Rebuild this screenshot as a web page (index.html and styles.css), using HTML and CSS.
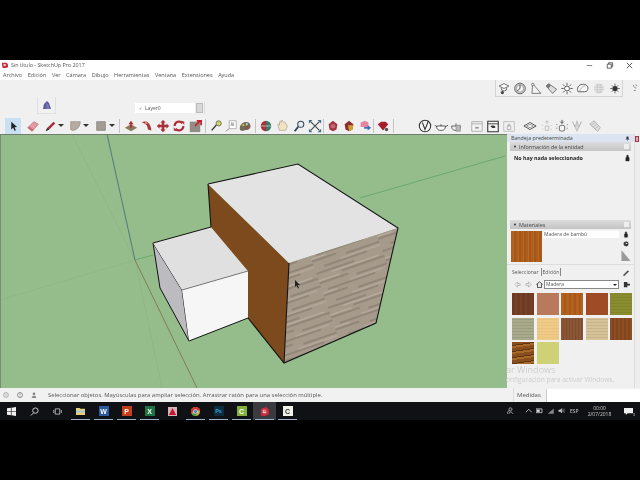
FILE: index.html
```html
<!DOCTYPE html>
<html lang="es">
<head>
<meta charset="utf-8">
<title>Sin título - SketchUp Pro 2017</title>
<link rel="stylesheet" href="styles.css">
</head>
<body>
<div class="letterbox"></div>
<main class="window">
  <header class="titlebar">
    <svg class="app-icon" viewBox="0 0 8 8"><path d="M0 1h6l2 2v4l-3 1H1L0 5z" fill="#c8323c"/><path d="M2 3h3v2H2z" fill="#fff"/></svg>
    <span class="title">Sin título - SketchUp Pro 2017</span>
    <span class="win-controls">
      <svg viewBox="0 0 10 10"><path d="M2 5h6" stroke="#777"/></svg>
      <svg viewBox="0 0 10 10"><path d="M2.5 3.5h4.500v4.500h-4.500zM4 3.500v-1.500h4.500v4.500h-1.500" fill="none" stroke="#555"/></svg>
      <svg viewBox="0 0 10 10"><path d="M2 2l6 6M8 2l-6 6" stroke="#444"/></svg>
    </span>
  </header>
  <nav class="menubar">
    <span>Archivo</span><span>Edición</span><span>Ver</span><span>Cámara</span><span>Dibujo</span><span>Herramientas</span><span>Ventana</span><span>Extensiones</span><span>Ayuda</span>
  </nav>
  <div class="toolbars">
    <div class="tool-row row-one">
      <div class="tool-group boxed">
        <svg class="ic" viewBox="0 0 16 16"><path d="M2 5l6-3 6 3-6 3zM5 7v3l3 1 3-1V7" fill="#fff" stroke="#444" stroke-width=".9"/><circle cx="6" cy="13" r="2" fill="#444"/></svg>
        <svg class="ic" viewBox="0 0 16 16"><circle cx="8" cy="8" r="6.500" fill="#ddd" stroke="#444"/><circle cx="8" cy="8" r="4.500" fill="#f4f4f4" stroke="#666" stroke-width=".7"/><path d="M8 3.500V8L4.500 11" fill="none" stroke="#333"/></svg>
        <svg class="ic" viewBox="0 0 16 16"><path d="M4 2l10 12H3z" fill="#f2f2f0" stroke="#555" stroke-width=".9"/><circle cx="4" cy="3" r="1.500" fill="#fff" stroke="#444" stroke-width=".8"/></svg>
        <svg class="ic" viewBox="0 0 16 16"><path d="M2 5l3-3 10 7-5 5z" fill="#ddd" stroke="#555" stroke-width=".9"/><path d="M2 5l3-3 3 2-3 4z" fill="#777"/></svg>
        <svg class="ic" viewBox="0 0 16 16"><circle cx="8" cy="8" r="3" fill="#fff" stroke="#333"/><path d="M8 1v3M8 12v3M1 8h3M12 8h3M3 3l2 2M11 11l2 2M13 3l-2 2M5 11l-2 2" stroke="#444"/></svg>
        <svg class="ic" viewBox="0 0 16 16"><path d="M2 12a6 6 0 0 1 5-9c4-1 8 2 7 6-1 3-3 3-6 3z" fill="#f7f7f7" stroke="#444"/><path d="M4 12c0-4 3-6 7-8" fill="none" stroke="#777" stroke-width=".7"/></svg>
        <svg class="ic" viewBox="0 0 16 16"><circle cx="8" cy="8" r="6" fill="#c8c8c8"/><path d="M2 8h12M8 2v12M4 3.500v9M12 3.500v9M3 5h10M3 11h10" stroke="#eee" stroke-width=".7"/></svg>
        <svg class="ic" viewBox="0 0 16 16"><circle cx="8" cy="8" r="3.200" fill="#333"/><path d="M8 2v3M8 11v3M2 8h3M11 8h3M4 4l2 2M10 10l2 2M12 4l-2 2M6 10l-2 2" stroke="#555"/></svg>
      </div>
      <svg class="ic far" viewBox="0 0 16 16"><path d="M2 3c1 4 3 5 5 5M3 12h3M6 2l2 3" fill="none" stroke="#555"/></svg>
    </div>
    <div class="tool-row row-two">
      <div class="shape-handle"><svg class="ic small" viewBox="0 0 12 12"><path d="M2 10l1-5 3-3 2 2 2 6z" fill="#5d5a9c"/><path d="M5 4l2 1 2 5H5z" fill="#7673b5"/></svg></div>
      <div class="layer-box">
        <span class="layer-field"><span class="check">✓</span>Layer0</span>
        <span class="layer-arrow"></span>
      </div>
    </div>
    <div class="tool-row row-three">
      <span class="active"><svg class="ic" viewBox="0 0 16 16"><path d="M6 3v9l2.200-2 1.600 3.500 1.500-.7L9.700 9.400l3-.4z" fill="#222"/></svg></span>
      <svg class="ic gap-4" viewBox="0 0 16 16"><path d="M2 10l7-7 5 3-7 8z" fill="#e79aa3" stroke="#a85a66" stroke-width=".7"/><path d="M2 10l5 4 1.500-1.700-5-4z" fill="#c96a78"/></svg>
      <svg class="ic gap-1" viewBox="0 0 16 16"><path d="M3 14l2-4 7-7 2 2-7 7z" fill="#a5303f"/><path d="M3 14l2-4 2 2z" fill="#333"/></svg>
      <span class="drop"></span>
      <svg class="ic gap-3" viewBox="0 0 16 16"><path d="M3 3h11c0 6-4 10-9 10l-2-1z" fill="#b6aba1" stroke="#8d837a" stroke-width=".7"/></svg>
      <span class="drop"></span>
      <svg class="ic gap-4" viewBox="0 0 16 16"><path d="M3 3h10v10H3z" fill="#a39c95" stroke="#7d7873" stroke-width=".7"/></svg>
      <span class="drop"></span>
      <span class="sep sep-wide"></span>
      <svg class="ic" viewBox="0 0 16 16"><path d="M1 10l7-4 7 4-7 4z" fill="#8c7a5c"/><path d="M8 2l3 4H9v4H7V6H5z" fill="#a9323a"/></svg>
      <svg class="ic" viewBox="0 0 16 16"><path d="M2 4c5-3 10 0 11 9l-4-1C9 7 6 5 2 4z" fill="#a9323a"/><path d="M7 2l2 3-4 1z" fill="#d88"/></svg>
      <svg class="ic" viewBox="0 0 16 16"><path d="M8 1l3 3H9.500v2.500H12V5l3 3-3 3V9.500H9.500V12H11l-3 3-3-3h1.500V9.500H4V11L1 8l3-3v1.500h2.500V4H5z" fill="#a9323a"/></svg>
      <svg class="ic" viewBox="0 0 16 16"><path d="M3 8a5 5 0 0 1 9-3M13 8a5 5 0 0 1-9 3" fill="none" stroke="#b02c36" stroke-width="2.400"/><path d="M11 2l3 1v4zM5 14l-3-1V9z" fill="#b02c36"/></svg>
      <svg class="ic" viewBox="0 0 16 16"><path d="M2 3h12v12H2z" fill="#918c86"/><path d="M8 8l6-6M10 2h5v5" fill="none" stroke="#c4202e" stroke-width="2"/></svg>
      <span class="sep"></span>
      <svg class="ic" viewBox="0 0 16 16"><path d="M3 13l8-9" stroke="#333" stroke-width="1.500"/><circle cx="11" cy="5" r="3" fill="#cbd26b" stroke="#554" stroke-width=".8"/></svg>
      <svg class="ic neg-1" viewBox="0 0 16 16"><path d="M6 2h8v9H6z" fill="#fff" stroke="#999" stroke-width=".8"/><path d="M2 14l4-3" stroke="#888"/><path d="M8 8l1-4 1 4M11 4v4" stroke="#777" stroke-width=".7" fill="none"/></svg>
      <svg class="ic neg-2" viewBox="0 0 16 16"><path d="M2 11c0-6 6-9 10-7 3 2 3 6 1 7-2 2-4 1-6 2-3 1-5 0-5-2z" fill="#6f6a55"/><circle cx="6" cy="7" r="1.300" fill="#d8b94a"/><circle cx="10" cy="6" r="1.300" fill="#c7c7c7"/><circle cx="11" cy="10" r="1.300" fill="#b33"/></svg>
      <span class="sep"></span>
      <svg class="ic" viewBox="0 0 16 16"><path d="M8 2a6 6 0 0 0 0 12z" fill="#a9323a"/><path d="M8 2a6 6 0 0 1 0 12z" fill="#3a7a66"/><path d="M2 8h12" stroke="#eee" stroke-width=".7"/></svg>
      <svg class="ic gap-1" viewBox="0 0 16 16"><path d="M4 13L2 7c0-2 2-1 2 0V4c0-2 2-2 2 0V3c0-2 2-2 2 0l1 1c1-1 2 0 2 1l2 3-2 5z" fill="#efe3c6" stroke="#a89878" stroke-width=".7"/></svg>
      <svg class="ic" viewBox="0 0 16 16"><circle cx="10" cy="6" r="3.500" fill="#e4ecf4" stroke="#345" stroke-width="1.200"/><path d="M7 9l-4 5" stroke="#345" stroke-width="2"/></svg>
      <svg class="ic" viewBox="0 0 16 16"><path d="M3 3l10 10M13 3L3 13" stroke="#4a4f55" stroke-width="1.500"/><path d="M1 1h4L1 5zM15 1v4l-4-4zM1 15v-4l4 4zM15 15h-4l4-4z" fill="#3c6f8c"/></svg>
      <span class="sep sep-tight"></span>
      <svg class="ic" viewBox="0 0 16 16"><path d="M3 6l5-4 5 4-1 6-4 2-4-2z" fill="#a1323e"/><path d="M6 6h4l1 3-3 2-3-2z" fill="#c76870"/></svg>
      <svg class="ic" viewBox="0 0 16 16"><path d="M3 6l5-4 5 4-1 6-4 2-4-2z" fill="#8c3030"/><path d="M7 7h6l-1 5-4 2z" fill="#d2a030"/></svg>
      <svg class="ic" viewBox="0 0 16 16"><path d="M3 4l5-2 4 2v5H3z" fill="#e586a0"/><path d="M7 9h4V7l4 3-4 3v-2H7z" fill="#3f6fb0"/></svg>
      <span class="sep sep-tight"></span>
      <svg class="ic" viewBox="0 0 16 16"><path d="M2 6l4-3h5l3 3-6 7z" fill="#a51d2c"/><circle cx="12" cy="12" r="2" fill="#555"/></svg>
      <span class="sep spacer"></span>
      <svg class="ic" viewBox="0 0 16 16"><circle cx="8" cy="8" r="6.500" fill="#f6f6f6" stroke="#333" stroke-width="1.200"/><path d="M5 4l3 8 4-10" fill="none" stroke="#333" stroke-width="1.200"/></svg>
      <svg class="ic" viewBox="0 0 16 16"><path d="M3 8h10c0 4-2 5-5 5s-5-1-5-5zM13 9l3-2M3 9L1 7M8 6v2" fill="#fff" stroke="#444"/></svg>
      <svg class="ic neg-1" viewBox="0 0 16 16"><path d="M3 8h10c0 4-2 5-5 5s-5-1-5-5zM8 5v3" fill="#eee" stroke="#555"/><path d="M8 7h5v7H8z" fill="#b8b8b8" stroke="#777" stroke-width=".6"/></svg>
      <svg class="ic gap-5" viewBox="0 0 16 16"><path d="M2 3h12v11H2z" fill="#f2f2f2" stroke="#aaa"/><path d="M2 5.500h12" stroke="#aaa"/><path d="M6 9h4v2H6z" fill="#999"/></svg>
      <svg class="ic" viewBox="0 0 16 16"><path d="M2 2.500h12v12H2z" fill="#f5f5f5" stroke="#333" stroke-width="1.200"/><path d="M2 5.500h12" stroke="#333"/><path d="M5 8c2-1 4-1 6 1-2 2-4 2-6-1z" fill="#333"/></svg>
      <svg class="ic" viewBox="0 0 16 16"><path d="M2 3h12v11H2z" fill="#f2f2f2" stroke="#bbb"/><path d="M6 8h4v4H6zM7 8V6h2v2" fill="none" stroke="#aaa"/></svg>
      <svg class="ic gap-5" viewBox="0 0 16 16"><path d="M1 8l7-4 7 4-7 4z" fill="#fafafa" stroke="#444"/><path d="M4 8l4-2 4 2-4 2z" fill="none" stroke="#666" stroke-width=".7"/></svg>
      <svg class="ic gap-1" viewBox="0 0 16 16"><path d="M6 8h4v5H6z" fill="#eee" stroke="#bbb"/><path d="M8 2v4M6 4l2-2 2 2" fill="none" stroke="#bbb"/><path d="M3 7v1M13 7v1M3 11v1M13 11v1" stroke="#bbb"/></svg>
      <svg class="ic neg-1" viewBox="0 0 16 16"><path d="M5 8l3-1 3 1v5l-3 1-3-1z" fill="#f4f4f4" stroke="#666"/><path d="M8 1v4M6 3l2 2 2-2" fill="none" stroke="#444"/><path d="M2 6v1M14 6v1M2 10v1M14 10v1" stroke="#555"/></svg>
      <svg class="ic neg-1" viewBox="0 0 16 16"><path d="M8 14L3 3l3 6 2-7 2 7 3-6z" fill="#d7d7d7" stroke="#aaa" stroke-width=".7"/></svg>
      <svg class="ic gap-2" viewBox="0 0 16 16"><path d="M2 6l5-4 7 8-3 4z" fill="#e0e0e0" stroke="#aaa"/><path d="M4 7l4-3M6 9l4-3M8 11l4-3" stroke="#aaa" stroke-width=".7"/></svg>
    </div>
  </div>
  <div class="workspace">
    <div class="canvas">
      <svg class="scene" viewBox="0 134 507 254" preserveAspectRatio="none">
        <defs>
          <filter id="soft" x="-5%" y="-5%" width="110%" height="110%"><feGaussianBlur stdDeviation=".6"/></filter>
          <pattern id="wood" width="70" height="36" patternUnits="userSpaceOnUse" patternTransform="rotate(-19)">
            <rect width="70" height="36" fill="#a69a8b"/>
            <path d="M0 2h40M25 7h45M0 12h30M38 15h32M6 20h50M0 25h25M35 28h35M10 33h45" stroke="#7f7365" stroke-width="1.100"/>
            <path d="M15 4.500h50M0 9.500h22M30 18h35M0 22.500h15M28 31h42" stroke="#bbb0a1" stroke-width="1.200"/>
          </pattern>
        </defs>
        <path class="axis faint" d="M72 134L135 260L162 388"/>
        <path class="axis faint" d="M0 300L135 260"/>
        <path class="axis blue" d="M107 134L135 260"/>
        <path class="axis red" d="M135 260L197 388"/>
        <path class="axis green" d="M135 260L153 255"/>
        <path class="axis green" d="M360 198L505 156"/>
        <path d="M153 243L182 290L189 341L160 288Z" fill="#bcbcc0" stroke="#111"/>
        <path d="M182 290L248 271V318L189 341Z" fill="#f6f6f7"/>
        <path d="M153 243L211 227L248 271L182 290Z" fill="#e0e0e1"/>
        <path d="M182 290L248 271" stroke="#333" stroke-width=".6"/>
        <path d="M248 318L189 341" stroke="#111"/>
        <path d="M153 243L211 227" stroke="#111"/>
        <path d="M208 184L289 263L284 363L248 318V271L211 227Z" fill="#7d4a1e"/>
        <path d="M208 184L298 164L398 228L289 263Z" fill="#e4e3e4"/>
        <path d="M289 263L398 228L376 323L284 363Z" fill="url(#wood)" filter="url(#soft)"/>
        <path d="M208 184L298 164L398 228L376 323L284 363L248 318M208 184L211 227M289 263L284 363" fill="none" stroke="#141414" stroke-width="1.100"/>
        <path d="M295 280v7l1.500-1.500 1.500 3 1-.5-1.500-3h2.500z" fill="#222"/>
      </svg>
    </div>
    <aside class="dock">
      <div class="tray">
        <div class="tray-title"><span>Bandeja predeterminada</span><svg class="pin" viewBox="0 0 6 6"><path d="M2 1h2v2l1 1H1l1-1zM3 4v2" fill="#334" stroke="#334" stroke-width=".4"/></svg></div>
        <div class="panel-head"><span class="tri">▼</span>Información de la entidad<span class="head-x"></span></div>
        <div class="entity-body">
          <div class="entity-line"><b>No hay nada seleccionado</b><svg class="lock" viewBox="0 0 6 9"><path d="M1 4h4v4H1zM2 4V2a1 1 0 0 1 2 0v2" fill="#222" stroke="#222" stroke-width=".5"/></svg></div>
        </div>
        <div class="panel-head"><span class="tri">▼</span>Materiales<span class="head-x"></span></div>
        <div class="material-top">
          <div class="preview"></div>
          <div class="mat-name">Madera de bambú</div>
          <div class="mat-side">
            <svg viewBox="0 0 6 9"><path d="M1 4h4v4H1zM2 4V2a1 1 0 0 1 2 0v2" fill="#222" stroke="#222" stroke-width=".5"/></svg>
            <svg viewBox="0 0 9 9"><path d="M1 3l4-2 3 2v4l-3 2-4-2z" fill="#333"/><path d="M4 3l3 1-3 2z" fill="#ddd"/></svg>
            <svg class="mat-wedge" viewBox="0 0 10 12"><path d="M0 0l10 12H0z" fill="#9a9a9c"/></svg>
          </div>
        </div>
        <div class="tabs">
          <span class="tab">Seleccionar</span><span class="tab tab-edit">Edición</span>
          <svg class="dropper" viewBox="0 0 10 10"><path d="M1 9l6-6 2 1-6 6z" fill="#555"/></svg>
        </div>
        <div class="nav-row">
          <svg viewBox="0 0 8 8"><path d="M1 4l3-3v2h3v2H4v2z" fill="none" stroke="#999" stroke-width=".7"/></svg>
          <svg viewBox="0 0 8 8"><path d="M7 4L4 1v2H1v2h3v2z" fill="none" stroke="#999" stroke-width=".7"/></svg>
          <svg viewBox="0 0 9 9"><path d="M.5 4.500L4.500 1l4 3.500M2 4v4.500h5V4" fill="#eee" stroke="#222"/></svg>
          <span class="nav-select">Madera<i></i></span>
          <svg viewBox="0 0 8 8"><path d="M1 1h4v2l3-0v2l-3 0v2H1z" fill="#333"/></svg>
        </div>
        <div class="swatches">
          <span class="sw s1"></span><span class="sw s2"></span><span class="sw s3"></span><span class="sw s4"></span><span class="sw s5"></span>
          <span class="sw s6"></span><span class="sw s7"></span><span class="sw s8"></span><span class="sw s9"></span><span class="sw s10"></span>
          <span class="sw s11"></span><span class="sw s12"></span>
        </div>
        <div class="watermark">
          <div class="wm-big">ar Windows</div>
          <div class="wm-small">onfiguración para activar Windows.</div>
        </div>
      </div>
      <div class="dock-strip">
        <span class="strip-pink"></span>
      </div>
    </aside>
  </div>
  <footer class="statusbar">
    <span class="status-icons">
      <svg viewBox="0 0 8 8"><circle cx="4" cy="4" r="3.300" fill="#ddd" stroke="#888" stroke-width=".7"/></svg>
      <svg viewBox="0 0 8 8"><circle cx="4" cy="4" r="3.300" fill="#fff" stroke="#444" stroke-width=".8"/><path d="M4 2v2.500M4 5.500v1" stroke="#333" stroke-width=".8"/></svg>
      <svg viewBox="0 0 8 8"><circle cx="4" cy="2.500" r="1.800" fill="#888"/><path d="M1 8c0-4 6-4 6 0z" fill="#888"/></svg>
    </span>
    <span class="status-text">Seleccionar objetos. Mayúsculas para ampliar selección. Arrastrar ratón para una selección múltiple.</span>
    <span class="measure-label">Medidas</span>
    <span class="measure-input"></span>
  </footer>
</main>
<div class="taskbar">
  <span class="task"><svg viewBox="0 0 10 10"><path d="M0 1.500l4.300-.6v3.800H0zM5 .8L10 0v4.700H5zM0 5.300h4.300v3.800L0 8.500zM5 5.300h5V10l-5-.7z" fill="#f2f2f2"/></svg></span>
  <span class="task"><svg viewBox="0 0 10 10"><circle cx="6" cy="4" r="3" fill="none" stroke="#ddd"/><path d="M4 6.500L1 9.500" stroke="#ddd"/></svg></span>
  <span class="task wide"><svg viewBox="0 0 12 10"><path d="M3 1.500h6v7H3zM1 3v4M11 3v4" fill="none" stroke="#ddd"/></svg></span>
  <span class="task open"><svg viewBox="0 0 10 10"><path d="M0 1h4l1 1h5v7H0z" fill="#e8cf7a"/><path d="M0 4h10v2H0z" fill="#9fc6d8"/></svg></span>
  <span class="task open"><b class="tile word">W</b></span>
  <span class="task open"><b class="tile ppt">P</b></span>
  <span class="task open"><b class="tile xls">X</b></span>
  <span class="task"><svg viewBox="0 0 10 10"><path d="M0 0h10v10H0z" fill="#d8b4b8"/><path d="M5 1l4 8H1z" fill="#c1182e"/></svg></span>
  <span class="task open"><svg viewBox="0 0 10 10"><circle cx="5" cy="5" r="5" fill="#d8b234"/><path d="M5 0a5 5 0 0 0-4.400 7.500L3 4h7a5 5 0 0 0-5-4z" fill="#d2332c"/><path d="M.6 7.500A5 5 0 0 0 5 10l2.200-3.500z" fill="#3b9a4a"/><circle cx="5" cy="5" r="2.200" fill="#3e7fd6" stroke="#fff" stroke-width=".6"/></svg></span>
  <span class="task open"><b class="tile ps">Ps</b></span>
  <span class="task open"><b class="tile cam">C</b></span>
  <span class="task current"><svg viewBox="0 0 10 10"><path d="M1 2l6-2 3 3v5l-4 2H1z" fill="#c92a3a"/><path d="M3 3h4v1H4v1h3v2H3z" fill="#f1c9cd"/></svg></span>
  <span class="task open"><b class="tile cwhite">C</b></span>
  <span class="tray-icons">
    <svg class="people" viewBox="0 0 10 10"><circle cx="6" cy="3" r="2" fill="none" stroke="#ccc"/><path d="M2 9c0-3 1-4 3-4M4 9c0-3 4-3 5 0" fill="none" stroke="#ccc"/></svg>
    <svg viewBox="0 0 10 10"><path d="M1 7l4-4 4 4" fill="none" stroke="#ddd"/></svg>
    <svg viewBox="0 0 10 10"><path d="M0 2.500h8v5H0z" fill="none" stroke="#ddd"/><path d="M1 3.500h4v3H1z" fill="#ddd"/></svg>
    <svg viewBox="0 0 10 10"><path d="M1 9l8-7v7z" fill="#888"/></svg>
    <svg viewBox="0 0 10 10"><path d="M1 4h2l2-2v6L3 6H1zM6.500 3.500v3M8 2v6" fill="#ccc" stroke="#ccc" stroke-width=".6"/></svg>
    <span class="lang">ESP</span>
    <span class="clock"><span>00:00</span><span>2/07/2018</span></span>
    <span class="notify"><svg viewBox="0 0 10 10"><path d="M0 1h10v6H4L2 9V7H0z" fill="#eee"/></svg><i>3</i></span>
  </span>
</div>
<div class="letterbox grow"></div>
</body>
</html>
```
FILE: styles.css
```css
* { box-sizing: border-box; }
html, body { margin: 0; padding: 0; height: 100%; }
body {
  width: 640px;
  height: 480px;
  overflow: hidden;
  background: #000;
  display: flex;
  flex-direction: column;
  font-family: "Open Sans", "Liberation Sans", sans-serif;
  color: #333;
}
.letterbox { height: 60px; flex: none; background: #000; }
.letterbox.grow { flex: 1; height: auto; }

.window { height: 342px; flex: none; display: flex; flex-direction: column; background: #f0f0f0; }

.titlebar { height: 10px; flex: none; background: #fff; display: flex; align-items: center; padding-left: 2px; font-size: 5.350px; color: #555; filter: blur(.3px); }
.app-icon { width: 6px; height: 6px; margin-right: 3px; }
.win-controls { margin-left: auto; display: flex; gap: 11px; margin-right: 6px; }
.win-controls svg { width: 9px; height: 9px; }

.menubar { height: 10px; flex: none; background: #fff; display: flex; align-items: center; padding-left: 3px; gap: 5.600px; font-size: 5.500px; color: #555; filter: blur(.3px); }

.toolbars { height: 54px; flex: none; background: #f0f0f0; display: flex; flex-direction: column; filter: blur(.4px); }
.tool-row { display: flex; }
.row-one { height: 17px; padding-left: 495px; }
.tool-group.boxed { display: flex; align-items: center; width: 128px; height: 17px; border-right: 1px solid #d4d4d4; border-bottom: 1px solid #d4d4d4; border-left: 1px solid #d4d4d4; }
.ic { width: 16px; height: 16px; flex: none; padding: 1px; }
.tool-group .ic { width: 16px; height: 15px; margin-right: -.2px; padding: 1px; }
.ic.far { width: 12px; margin-left: 8px; }
.row-two { height: 21px; padding-left: 37px; }
.shape-handle { width: 19px; height: 17px; border: 1px solid #e0e0e0; border-top: 0; display: flex; align-items: center; justify-content: center; }
.ic.small { width: 12px; height: 12px; padding: 0; }
.layer-box { margin: 5px 0 0 77px; width: 72px; height: 12px; display: flex; align-items: center; border-right: 1px solid #dcdcdc; padding-left: 2px; font-size: 5px; color: #555; }
.layer-field { width: 60px; height: 10px; background: #fff; display: flex; align-items: center; padding-left: 4px; }
.check { margin-right: 3px; font-size: 4px; }
.layer-arrow { width: 7px; height: 10px; margin-left: 1px; background: #d8d8d8; border: 1px solid #bbb; }
.row-three { height: 16px; align-items: center; padding-left: 5px; }
.active { width: 16px; height: 16px; background: #c9dff2; display: flex; align-items: center; justify-content: center; }
.active .ic { width: 14px; height: 14px; padding: 0; }
.drop { width: 6px; height: 16px; flex: none; position: relative; }
.drop::after { content: ""; position: absolute; left: 0; top: 6px; border: 3px solid transparent; border-top: 3px solid #333; }
.gap-1 { margin-left: 1px; }
.gap-2 { margin-left: 2px; }
.gap-3 { margin-left: 3px; }
.gap-4 { margin-left: 4px; }
.gap-5 { margin-left: 5px; }
.neg-1 { margin-left: -1px; }
.neg-2 { margin-left: -2px; }
.sep { width: 1px; height: 14px; background: #c4c4c4; margin: 0 2px; flex: none; }
.sep-wide { margin-left: 4px; margin-right: 3px; }
.sep-tight { margin: 0 1px 0 0; }
.sep.spacer { margin-right: 23px; }

.workspace { height: 254px; flex: none; display: flex; }
.canvas { width: 507px; flex: none; background: #95bd8b; border-top: 1px solid #6f7f6b; border-left: 1px solid #7c8a78; overflow: hidden; }
.scene { display: block; width: 507px; height: 254px; margin: -1px 0 0 -1px; }
.axis { fill: none; stroke-width: .8; }
.axis.blue { stroke: #3f6a78; }
.axis.red { stroke: #7f6c48; }
.axis.green { stroke: #5fa364; }
.axis.faint { stroke: #8bb381; stroke-width: .6; }

.dock { width: 133px; flex: none; display: flex; background: #f0f0f0; font-size: 5.300px; color: #555; }
.tray { width: 127px; flex: none; display: flex; flex-direction: column; filter: blur(.25px); }
.tray-title { height: 8px; background: #dbe4f0; display: flex; align-items: center; justify-content: space-between; padding: 0 4px; color: #444; flex: none; }
.pin { width: 5px; height: 5px; }
.panel-head { margin: 0 3px; height: 9px; flex: none; background: linear-gradient(#dcdcdc, #c4c4c4); display: flex; align-items: center; padding-left: 3px; font-size: 5.400px; color: #444; }
.tri { font-size: 4px; margin-right: 2px; color: #222; }
.head-x { margin-left: auto; width: 5px; height: 5px; background: #eee; margin-right: 2px; }
.entity-body { height: 69px; flex: none; padding: 2px 4px 0 7px; }
.entity-line { display: flex; align-items: center; justify-content: space-between; height: 9px; font-size: 5.300px; color: #222; }
.lock { width: 5px; height: 8px; }
.material-top { display: flex; padding: 2px 4px 0 4px; height: 34px; flex: none; }
.preview { width: 31px; height: 31px; background: repeating-linear-gradient(90deg, #ad5d1c 0 2px, #b8681f 2px 3px, #a5561a 3px 5px); flex: none; }
.mat-name { width: 76px; height: 7px; background: #fff; margin-left: 1px; font-size: 5px; line-height: 7px; padding-left: 1px; flex: none; }
.mat-side { margin-left: 2px; display: flex; flex-direction: column; align-items: center; gap: 2px; width: 10px; }
.mat-side svg { width: 6px; height: 7px; }
.mat-side .mat-wedge { width: 10px; height: 11px; margin-top: 1px; }
.tabs { height: 14px; margin-top: 1px; flex: none; border-top: 1px solid #ddd; display: flex; align-items: center; padding: 0 4px 0 5px; font-size: 5px; }
.tab { padding-right: 2px; }
.tab-edit { border: 1px solid #888; border-width: 0 1px; padding: 1px 1px; margin-left: 0; }
.dropper { width: 8px; height: 8px; margin-left: auto; }
.nav-row { height: 10px; margin-top: 1px; flex: none; display: flex; align-items: center; gap: 4px; padding-left: 7px; }
.nav-row svg { width: 7px; height: 7px; flex: none; }
.nav-row .nav-select { width: 75px; height: 9px; background: #fff; border: 1px solid #888; margin-left: -3px; position: relative; padding-left: 1px; line-height: 7px; font-size: 5px; }
.nav-select i { position: absolute; right: 1px; top: 3px; border: 2px solid transparent; border-top-color: #222; }
.swatches { display: grid; grid-template-columns: repeat(5, 22px); grid-auto-rows: 22px; gap: 2.500px; padding: 4px 0 0 5px; flex: none; }
.sw { display: block; }
.s1 { background: repeating-linear-gradient(90deg, #6e3a24 0 3px, #774029 3px 5px); }
.s2 { background: #b97a5c; }
.s3 { background: repeating-linear-gradient(90deg, #b3621f 0 3px, #a95818 3px 5px); }
.s4 { background: #9e4b26; }
.s5 { background: repeating-linear-gradient(0deg, #8a8c30 0 2px, #838529 2px 3px); }
.s6 { background: repeating-linear-gradient(0deg, #a9aa8b 0 2px, #9c9d80 2px 3px); }
.s7 { background: repeating-linear-gradient(0deg, #efca88 0 2px, #e9c27c 2px 3px); }
.s8 { background: repeating-linear-gradient(90deg, #8b5636 0 2px, #7e4d30 2px 3px); }
.s9 { background: repeating-linear-gradient(0deg, #d6c298 0 2px, #c8b38a 2px 3px); }
.s10 { background: repeating-linear-gradient(90deg, #8c4e22 0 2px, #80471e 2px 4px); }
.s11 { background: repeating-linear-gradient(172deg, #8a4d1c 0 3px, #5d3514 3px 4px, #a86a28 4px 6px); }
.s12 { background: #cfd176; }
.watermark { margin: 1px 0 0 -1px; color: #cdcdcd; line-height: 1; }
.wm-big { font-size: 9px; }
.wm-small { font-size: 6.600px; margin-top: 3px; }
.dock-strip { width: 6px; flex: none; background: #ededed; border-left: 1px solid #ddd; padding-top: 2px; }
.strip-pink { display: block; width: 4px; height: 6px; background: #e9a3b4; border: 1px solid #a0384c; }

.statusbar { height: 14px; flex: none; display: flex; align-items: center; background: #f1f1f1; font-size: 5.900px; color: #555; filter: blur(.25px); }
.status-icons { display: flex; gap: 8px; padding-left: 3px; width: 48px; }
.status-icons svg { width: 6px; height: 6px; flex: none; }
.status-text { width: 465px; white-space: nowrap; flex: none; }
.measure-label { width: 33px; height: 14px; line-height: 14px; padding-left: 3px; border-left: 1px solid #ddd; flex: none; font-size: 6px; }
.measure-input { flex: 1; height: 13px; background: #fff; border-left: 1px solid #ccc; }

.taskbar { height: 18px; flex: none; display: flex; align-items: stretch; background: #101114; color: #ddd; filter: blur(.25px); }
.task { width: 23px; flex: none; display: flex; align-items: center; justify-content: center; position: relative; }
.task.wide { width: 24px; margin-left: -1px; padding-right: 0; }
.task svg { width: 9px; height: 9px; }
.task.open::after, .task.current::after { content: ""; position: absolute; left: 2px; right: 2px; bottom: 0; height: 1px; background: #9db4c8; }
.task.current { background: #3a3b40; }
.tile { display: flex; align-items: center; justify-content: center; width: 10px; height: 10px; font-size: 7px; font-weight: 700; color: #fff; font-family: "Liberation Sans", sans-serif; }
.tile.word { background: #2b5b9e; }
.tile.ppt { background: #c43e1c; }
.tile.xls { background: #1f7244; }
.tile.ps { background: #0d2c3e; color: #39a7e0; font-size: 5.500px; }
.tile.cam { background: #7fb13c; }
.tile.cwhite { background: #f1f1ea; color: #2b3a2d; }
.tray-icons { margin-left: auto; display: flex; align-items: center; gap: 3.500px; padding-right: 2px; font-size: 5px; color: #ccc; }
.tray-icons svg { width: 7.500px; height: 7.500px; flex: none; }
.tray-icons .people { margin-right: 8px; }
.lang { margin: 0 1.500px 0 .5px; }
.clock { display: flex; flex-direction: column; align-items: center; line-height: 6.500px; width: 32px; }
.notify { position: relative; margin: 0 5px 0 5px; display: flex; }
.notify svg { width: 9px; height: 9px; }
.notify i { position: absolute; right: -2px; bottom: -1px; font-size: 4px; font-style: normal; }
```
